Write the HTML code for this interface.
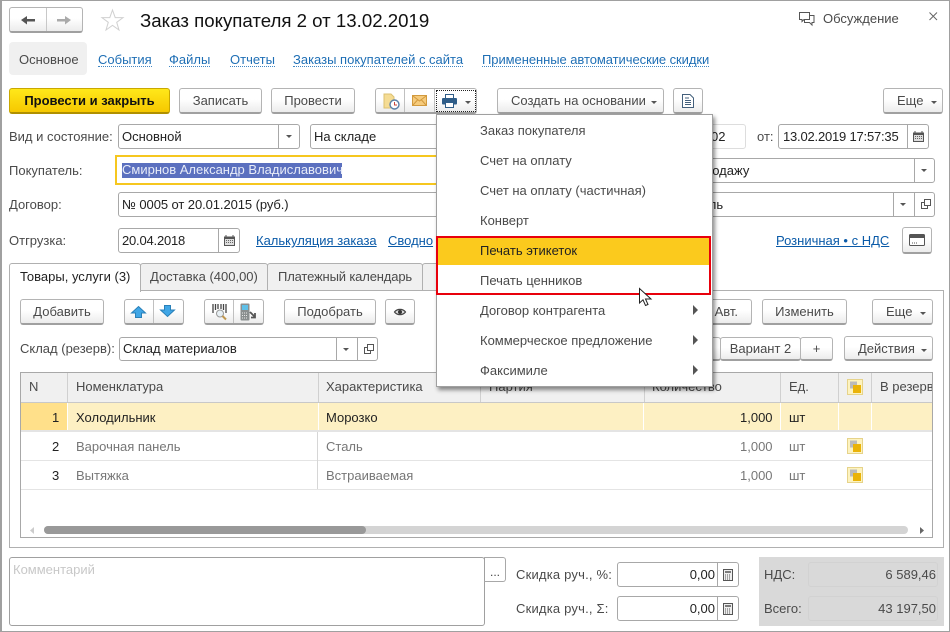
<!DOCTYPE html>
<html><head><meta charset="utf-8">
<style>
html,body{margin:0;padding:0;background:#fff}
#p{position:relative;width:950px;height:632px;overflow:hidden;background:#fff;font-family:"Liberation Sans",sans-serif;font-size:13px;color:#4a4a4a}
#p *{box-sizing:border-box}
.t{position:absolute;white-space:nowrap;line-height:16px;height:16px}
.d{color:#222}
.g{color:#777}
.a{position:absolute}
.l{color:#0a5aa8;text-decoration:underline}
.n{color:#1f6fb5;border-bottom:1px dotted #3f86c4;line-height:16px;height:15px}
.b{position:absolute;border:1px solid #b4b4b4;border-bottom:2px solid #a0a0a0;border-radius:3px;background:linear-gradient(#fff 0,#fff 45%,#ececec 100%);text-align:center;line-height:24px;color:#4a4a4a;white-space:nowrap}
.i{position:absolute;border:1px solid #a8a8a8;border-radius:3px;background:#fff;color:#222;line-height:23px;padding-left:3px;white-space:nowrap}
.v{position:absolute;width:1px;background:#a8a8a8}
.c{position:absolute;width:0;height:0;border-left:3px solid transparent;border-right:3px solid transparent;border-top:3px solid #555}
.m{position:absolute;left:480px;white-space:nowrap;line-height:16px;color:#4a4a4a}
.r{position:absolute;width:0;height:0;border-top:5px solid transparent;border-bottom:5px solid transparent;border-left:5px solid #555;left:693px}
.h{position:absolute;background:#f0f0f0;border-right:1px solid #d0d0d0;top:373px;height:29px}
.vc{position:absolute;width:1px;background:#d6d6d6}
svg{position:absolute;overflow:visible}
</style></head><body><div id="p">

<div class="a" style="left:0;top:0;width:950px;height:632px;border:1px solid #a0a0a0;border-width:1px 1px 1px 2px"></div>

<!-- nav -->
<div class="b" style="left:9px;top:7px;width:74px;height:26px"></div>
<div class="v" style="left:46px;top:8px;height:23px;background:#c8c8c8"></div>
<svg style="left:21px;top:14px" width="15" height="12"><path d="M0 6L6 2V5H14V7.500H6V10.500Z" fill="#555"/></svg>
<svg style="left:57px;top:14px" width="15" height="12"><path d="M14 6L8 2V5H0V7.500H8V10.500Z" fill="#aaa"/></svg>
<svg style="left:101px;top:9px" width="23" height="23"><path d="M11.5 1L14.2 8.6H22L15.7 13.3L18 21L11.5 16.4L5 21L7.3 13.3L1 8.6H8.8Z" fill="#fff" stroke="#d0d0d0"/></svg>
<div class="t" style="left:140px;top:10px;font-size:18.67px;line-height:22px;height:22px;color:#111">Заказ покупателя 2 от 13.02.2019</div>

<svg style="left:799px;top:12px" width="16" height="15"><path d="M.5.5H10.5V7.5H5L3 9.5V7.5H.5Z M5.5 7.5V10.5H10.5L13 13V10.5H15V3.5H10.5" fill="none" stroke="#555"/></svg>
<div class="t" style="left:823px;top:11px">Обсуждение</div>
<svg style="left:929px;top:12px" width="9" height="9"><path d="M.5.5L8 8M8 .5L.5 8" stroke="#666" fill="none"/></svg>

<!-- section nav -->
<div class="a" style="left:9px;top:42px;width:78px;height:33px;background:#f0f0f0;border-radius:4px"></div>
<div class="t" style="left:19px;top:52px">Основное</div>
<div class="t n" style="left:98px;top:52px">События</div>
<div class="t n" style="left:169px;top:52px">Файлы</div>
<div class="t n" style="left:230px;top:52px">Отчеты</div>
<div class="t n" style="left:293px;top:52px">Заказы покупателей с сайта</div>
<div class="t n" style="left:482px;top:52px;letter-spacing:-.06px">Примененные автоматические скидки</div>

<!-- command bar -->
<div class="b" style="left:9px;top:88px;width:161px;height:26px;background:linear-gradient(#ffe81a,#f6c800);border-color:#c9a800;border-bottom-color:#b09000;color:#111;font-weight:bold">Провести и закрыть</div>
<div class="b" style="left:179px;top:88px;width:83px;height:26px">Записать</div>
<div class="b" style="left:271px;top:88px;width:84px;height:26px">Провести</div>
<div class="b" style="left:375px;top:88px;width:102px;height:26px"></div>
<div class="v" style="left:404px;top:89px;height:23px;background:#c0c0c0"></div>
<div class="v" style="left:434px;top:89px;height:23px;background:#c0c0c0"></div>
<div class="a" style="left:436px;top:90px;width:40px;height:22px;border:1px dotted #222"></div>
<svg style="left:383px;top:93px" width="17" height="17"><path d="M1 1H8L11 4V15H1Z" fill="#f5dc94" stroke="#dcc070"/><circle cx="11.5" cy="11.5" r="4.5" fill="#fff" stroke="#5a7fa8" stroke-width="1.4"/><path d="M11.5 9V12H14" stroke="#c8463c" fill="none"/></svg>
<svg style="left:412px;top:95px" width="15" height="12"><rect x=".5" y=".5" width="14" height="10" fill="#f6cb7c" stroke="#d29a3e"/><path d="M1 1L7.500 6L14 1M1 10L5.500 5M14 10L9.500 5" fill="none" stroke="#d29a3e"/></svg>
<svg style="left:442px;top:94px" width="15" height="14"><rect x="3.500" y=".5" width="8" height="4" fill="#fff" stroke="#2f5d88"/><rect x="0" y="4" width="15" height="6.500" rx="1" fill="#2f5d88"/><rect x="3.500" y="8.500" width="8" height="5" fill="#fff" stroke="#2f5d88"/></svg>
<div class="c" style="left:465px;top:101px"></div>
<div class="b" style="left:497px;top:88px;width:167px;height:26px;text-align:left;padding-left:13px">Создать на основании</div>
<div class="c" style="left:651px;top:101px"></div>
<div class="b" style="left:673px;top:88px;width:30px;height:26px"></div>
<svg style="left:682px;top:94px" width="12" height="14"><path d="M.5.5H8L11.500 4V13.500H.5Z" fill="#fff" stroke="#44607c"/><path d="M3 4H7M3 6.500H9M3 8.500H9M3 10.500H9" stroke="#44607c"/></svg>
<div class="b" style="left:883px;top:88px;width:60px;height:26px;text-align:left;padding-left:13px">Еще</div>
<div class="c" style="left:931px;top:101px"></div>

<!-- row 1 -->
<div class="t" style="left:9px;top:129px">Вид и состояние:</div>
<div class="i" style="left:118px;top:124px;width:182px;height:25px">Основной</div>
<div class="v" style="left:278px;top:125px;height:23px"></div>
<div class="c" style="left:286px;top:135px"></div>
<div class="i" style="left:310px;top:124px;width:160px;height:25px">На складе</div>
<div class="i" style="left:650px;top:124px;width:96px;height:25px;border-color:#ddd;padding-left:60px">02</div>
<div class="t" style="left:757px;top:129px">от:</div>
<div class="i" style="left:778px;top:124px;width:151px;height:25px;padding-left:4px;letter-spacing:-.2px">13.02.2019 17:57:35</div>
<div class="v" style="left:907px;top:125px;height:23px"></div>
<svg style="left:913px;top:131px" width="11" height="11"><path d="M0 1.500H11V11H0Z" fill="#555"/><path d="M2 0V2M9 0V2" stroke="#555"/><path d="M1 4H10V10H1Z" fill="#ddd"/><path d="M2 5.500H9M2 7.500H9" stroke="#666" stroke-dasharray="1 1"/></svg>

<!-- row 2 -->
<div class="t" style="left:9px;top:163px">Покупатель:</div>
<div class="a" style="left:115px;top:155px;width:340px;height:30px;border:2px solid #f6c71f;background:#fff"></div>
<div class="t" style="left:122px;top:163px;background:#5b70bf;color:#e8ecf8;height:15px;line-height:14px;width:220px">Смирнов Александр Владиславович</div>
<div class="i" style="left:650px;top:158px;width:285px;height:25px;padding-left:54px">родажу</div>
<div class="v" style="left:914px;top:159px;height:23px"></div>
<div class="c" style="left:921px;top:169px"></div>

<!-- row 3 -->
<div class="t" style="left:9px;top:197px">Договор:</div>
<div class="i" style="left:118px;top:192px;width:340px;height:25px;letter-spacing:-.08px">№ 0005 от 20.01.2015 (руб.)</div>
<div class="i" style="left:650px;top:192px;width:285px;height:25px;padding-left:51px">ель</div>
<div class="v" style="left:893px;top:193px;height:23px"></div>
<div class="v" style="left:914px;top:193px;height:23px"></div>
<div class="c" style="left:900px;top:203px"></div>
<svg style="left:921px;top:199px" width="10" height="10"><path d="M3.500.5H9.500V6.500H3.500Z M3.500 3.500H.5V9.500H6.500V6.500" fill="none" stroke="#555"/></svg>

<!-- row 4 -->
<div class="t" style="left:9px;top:233px">Отгрузка:</div>
<div class="i" style="left:118px;top:228px;width:122px;height:25px;letter-spacing:-.2px">20.04.2018</div>
<div class="v" style="left:218px;top:229px;height:23px"></div>
<svg style="left:224px;top:235px" width="11" height="11"><path d="M0 1.500H11V11H0Z" fill="#555"/><path d="M2 0V2M9 0V2" stroke="#555"/><path d="M1 4H10V10H1Z" fill="#ddd"/><path d="M2 5.500H9M2 7.500H9" stroke="#666" stroke-dasharray="1 1"/></svg>
<div class="t l" style="left:256px;top:233px">Калькуляция заказа</div>
<div class="t l" style="left:388px;top:233px">Сводно</div>
<div class="t l" style="left:776px;top:233px">Розничная • с НДС</div>
<div class="b" style="left:902px;top:227px;width:30px;height:27px"></div>
<svg style="left:909px;top:234px" width="16" height="12"><rect x=".5" y=".5" width="15" height="11" rx="1" fill="#fff" stroke="#555"/><rect x="1" y="1" width="14" height="3" fill="#555"/><path d="M3 9H8" stroke="#555" stroke-dasharray="1 1"/></svg>

<!-- tabs panel -->
<div class="a" style="left:9px;top:290px;width:935px;height:258px;border:1px solid #b0b0b0"></div>
<div class="a" style="left:9px;top:263px;width:132px;height:29px;border:1px solid #b0b0b0;border-bottom:0;background:#fff;border-radius:3px 3px 0 0"></div>
<div class="a" style="left:140px;top:263px;width:128px;height:28px;border:1px solid #b0b0b0;background:#f0f0f0;border-radius:3px 3px 0 0"></div>
<div class="a" style="left:267px;top:263px;width:156px;height:28px;border:1px solid #b0b0b0;background:#f0f0f0;border-radius:3px 3px 0 0"></div>
<div class="a" style="left:422px;top:263px;width:40px;height:28px;border:1px solid #b0b0b0;background:#f0f0f0;border-radius:3px 3px 0 0"></div>
<div class="t d" style="left:20px;top:269px">Товары, услуги (3)</div>
<div class="t" style="left:150px;top:269px">Доставка (400,00)</div>
<div class="t" style="left:278px;top:269px;letter-spacing:-.15px">Платежный календарь</div>

<!-- toolbar -->
<div class="b" style="left:20px;top:299px;width:84px;height:26px">Добавить</div>
<div class="b" style="left:124px;top:299px;width:60px;height:26px"></div>
<div class="v" style="left:153px;top:300px;height:23px;background:#c0c0c0"></div>
<svg style="left:131px;top:306px" width="15" height="12"><path d="M7.500 .5L14.500 7H10.500V11.500H4.500V7H.5Z" fill="#3fa6e6" stroke="#2a80b8"/></svg>
<svg style="left:160px;top:305px" width="15" height="12"><path d="M7.500 11.500L14.500 5H10.500V.5H4.500V5H.5Z" fill="#3fa6e6" stroke="#2a80b8"/></svg>
<div class="b" style="left:204px;top:299px;width:60px;height:26px"></div>
<div class="v" style="left:233px;top:300px;height:23px;background:#c0c0c0"></div>
<svg style="left:212px;top:304px" width="16" height="16"><path d="M1 0V9M3.500 0V6M6 0V5M9 0V5M11.500 0V6M14 0V9" stroke="#444" stroke-width="1.300" fill="none"/><circle cx="8" cy="9.500" r="3.500" fill="#e8f0f4" stroke="#999"/><path d="M10.500 12L14 15.500" stroke="#c09850" stroke-width="2"/></svg>
<svg style="left:240px;top:303px" width="17" height="18"><rect x=".5" y=".5" width="9" height="17" rx="1" fill="#8a8f8f"/><rect x="2" y="2" width="6" height="5" fill="#5fc0e8"/><path d="M2 10H8M2 12.500H8M2 15H8" stroke="#e8e8e8" stroke-dasharray="1 1"/><path d="M10 9L15 14M15 10V14.500H11" stroke="#555" stroke-width="1.800" fill="none"/></svg>
<div class="b" style="left:284px;top:299px;width:92px;height:26px">Подобрать</div>
<div class="b" style="left:385px;top:299px;width:30px;height:26px"></div>
<svg style="left:394px;top:308px" width="12" height="8"><path d="M.5 4C3 .5 9 .5 11.500 4C9 7.500 3 7.500 .5 4Z" fill="#ddd" stroke="#444" stroke-width="1.200"/><circle cx="6" cy="4" r="2" fill="#333"/></svg>
<div class="b" style="left:700px;top:299px;width:52px;height:26px;text-align:right;padding-right:13px">Авт.</div>
<div class="b" style="left:762px;top:299px;width:85px;height:26px">Изменить</div>
<div class="b" style="left:872px;top:299px;width:61px;height:26px;text-align:left;padding-left:13px">Еще</div>
<div class="c" style="left:920px;top:312px"></div>

<!-- warehouse row -->
<div class="t" style="left:20px;top:341px">Склад (резерв):</div>
<div class="i" style="left:119px;top:337px;width:259px;height:24px;line-height:21px">Склад материалов</div>
<div class="v" style="left:336px;top:338px;height:22px"></div>
<div class="v" style="left:357px;top:338px;height:22px"></div>
<div class="c" style="left:343px;top:348px"></div>
<svg style="left:364px;top:344px" width="10" height="10"><path d="M3.500.5H9.500V6.500H3.500Z M3.500 3.500H.5V9.500H6.500V6.500" fill="none" stroke="#555"/></svg>
<div class="b" style="left:700px;top:337px;width:21px;height:24px"></div>
<div class="b" style="left:720px;top:337px;width:81px;height:24px;line-height:21px">Вариант 2</div>
<div class="b" style="left:800px;top:337px;width:33px;height:24px;line-height:21px">+</div>
<div class="b" style="left:844px;top:336px;width:89px;height:25px;line-height:23px;text-align:left;padding-left:13px">Действия</div>
<div class="c" style="left:921px;top:349px"></div>

<!-- table -->
<div class="a" style="left:20px;top:372px;width:913px;height:166px;border:1px solid #a8a8a8;background:#fff;overflow:hidden"></div>
<div class="h" style="left:21px;width:47px"></div>
<div class="h" style="left:68px;width:251px"></div>
<div class="h" style="left:319px;width:162px"></div>
<div class="h" style="left:481px;width:164px"></div>
<div class="h" style="left:645px;width:136px"></div>
<div class="h" style="left:781px;width:58px"></div>
<div class="h" style="left:839px;width:33px"></div>
<div class="h" style="left:872px;width:60px;border-right:0"></div>
<div class="a" style="left:21px;top:402px;width:911px;height:1px;background:#c8c8c8"></div>
<div class="t" style="left:29px;top:379px">N</div>
<div class="t" style="left:76px;top:379px">Номенклатура</div>
<div class="t" style="left:326px;top:379px">Характеристика</div>
<div class="t" style="left:489px;top:379px">Партия</div>
<div class="t" style="left:652px;top:379px">Количество</div>
<div class="t" style="left:789px;top:379px">Ед.</div>
<div class="a" style="left:872px;top:373px;width:60px;height:29px;overflow:hidden"><div class="t" style="left:8px;top:6px">В резерве</div></div>
<svg style="left:847px;top:379px" width="16" height="16"><rect x=".5" y=".5" width="15" height="15" fill="#fdf3c0" stroke="#e6d38a"/><rect x="3" y="2.500" width="7" height="7" fill="#bbb"/><rect x="6" y="6" width="8" height="8" fill="#eab308"/></svg>

<div class="a" style="left:21px;top:403px;width:911px;height:27px;background:#fdf0c3"></div>
<div class="a" style="left:21px;top:403px;width:46px;height:27px;background:#ffe08a"></div>
<div class="a" style="left:67px;top:403px;width:1px;height:27px;background:#fff"></div>
<div class="a" style="left:318px;top:403px;width:1px;height:27px;background:#fff"></div>
<div class="a" style="left:643px;top:403px;width:1px;height:27px;background:#fff"></div>
<div class="a" style="left:780px;top:403px;width:1px;height:27px;background:#fff"></div>
<div class="a" style="left:838px;top:403px;width:1px;height:27px;background:#fff"></div>
<div class="a" style="left:871px;top:403px;width:1px;height:27px;background:#fff"></div>
<div class="a" style="left:21px;top:430px;width:911px;height:2px;background:#e4e4e4"></div>
<div class="a" style="left:21px;top:460px;width:911px;height:1px;background:#e4e4e4"></div>
<div class="a" style="left:21px;top:489px;width:911px;height:1px;background:#e4e4e4"></div>
<div class="vc" style="left:317px;top:432px;height:57px"></div>

<div class="t d" style="left:52px;top:410px">1</div>
<div class="t d" style="left:76px;top:410px">Холодильник</div>
<div class="t d" style="left:326px;top:410px">Морозко</div>
<div class="t d" style="left:740px;top:410px">1,000</div>
<div class="t d" style="left:789px;top:410px">шт</div>
<div class="t d" style="left:52px;top:439px">2</div>
<div class="t g" style="left:76px;top:439px">Варочная панель</div>
<div class="t g" style="left:326px;top:439px">Сталь</div>
<div class="t g" style="left:740px;top:439px">1,000</div>
<div class="t g" style="left:789px;top:439px">шт</div>
<div class="t d" style="left:52px;top:468px">3</div>
<div class="t g" style="left:76px;top:468px">Вытяжка</div>
<div class="t g" style="left:326px;top:468px">Встраиваемая</div>
<div class="t g" style="left:740px;top:468px">1,000</div>
<div class="t g" style="left:789px;top:468px">шт</div>
<svg style="left:847px;top:438px" width="16" height="16"><rect x=".5" y=".5" width="15" height="15" fill="#fdf3c0" stroke="#e6d38a"/><rect x="3" y="2.500" width="7" height="7" fill="#bbb"/><rect x="6" y="6" width="8" height="8" fill="#eab308"/></svg>
<svg style="left:847px;top:467px" width="16" height="16"><rect x=".5" y=".5" width="15" height="15" fill="#fdf3c0" stroke="#e6d38a"/><rect x="3" y="2.500" width="7" height="7" fill="#bbb"/><rect x="6" y="6" width="8" height="8" fill="#eab308"/></svg>

<!-- scrollbar -->
<div class="a" style="left:44px;top:526px;width:864px;height:8px;background:#d4d4d4;border-radius:4px"></div>
<div class="a" style="left:44px;top:526px;width:322px;height:8px;background:#999;border-radius:4px"></div>
<svg style="left:29px;top:527px" width="6" height="7"><path d="M5 0V7L1 3.500Z" fill="#ccc"/></svg>
<svg style="left:919px;top:527px" width="6" height="7"><path d="M1 0V7L5 3.500Z" fill="#666"/></svg>

<!-- menu -->
<div class="a" style="left:436px;top:114px;width:277px;height:273px;background:#fff;border:1px solid #a0a0a0;box-shadow:2px 3px 4px rgba(0,0,0,.45)"></div>
<div class="a" style="left:437px;top:237px;width:274px;height:28px;background:#fbca1d"></div>
<div class="m" style="top:123px">Заказ покупателя</div>
<div class="m" style="top:153px">Счет на оплату</div>
<div class="m" style="top:183px">Счет на оплату (частичная)</div>
<div class="m" style="top:213px">Конверт</div>
<div class="m" style="top:243px;color:#222">Печать этикеток</div>
<div class="m" style="top:273px">Печать ценников</div>
<div class="m" style="top:303px">Договор контрагента</div>
<div class="m" style="top:333px">Коммерческое предложение</div>
<div class="m" style="top:363px">Факсимиле</div>
<div class="r" style="top:305px"></div>
<div class="r" style="top:335px"></div>
<div class="r" style="top:365px"></div>
<div class="a" style="left:436px;top:236px;width:275px;height:59px;border:2px solid #e8000c"></div>
<svg style="left:639px;top:288px" width="14" height="19"><path d="M.5.5V15L4 11.800L6.500 17.500L9 16.500L6.500 11H12Z" fill="#fff" stroke="#222"/></svg>

<!-- bottom -->
<div class="a" style="left:9px;top:557px;width:476px;height:69px;border:1px solid #a0a0a0;border-radius:3px;background:#fff"></div>
<div class="t" style="left:13px;top:562px;color:#c8c8c8">Комментарий</div>
<div class="a" style="left:484px;top:557px;width:22px;height:25px;border:1px solid #a8a8a8;border-left:1px solid #a0a0a0;border-radius:0 3px 3px 0;background:#fff"></div>
<div class="t" style="left:490px;top:564px;color:#444;font-size:12px">...</div>
<div class="t" style="left:516px;top:567px;letter-spacing:.2px">Скидка руч., %:</div>
<div class="t" style="left:516px;top:601px;letter-spacing:.2px">Скидка руч., Σ:</div>
<div class="i" style="left:617px;top:562px;width:122px;height:25px;text-align:right;padding:0 23px 0 0">0,00</div>
<div class="i" style="left:617px;top:596px;width:122px;height:25px;text-align:right;padding:0 23px 0 0">0,00</div>
<div class="v" style="left:717px;top:563px;height:23px"></div>
<div class="v" style="left:717px;top:597px;height:23px"></div>
<svg style="left:723px;top:569px" width="10" height="12"><rect x=".5" y=".5" width="9" height="11" fill="#eee" stroke="#555"/><path d="M2 3H8" stroke="#555" stroke-width="1.500"/><path d="M2 6H8M2 8H8M2 10H8" stroke="#555" stroke-dasharray="1 1"/></svg>
<svg style="left:723px;top:603px" width="10" height="12"><rect x=".5" y=".5" width="9" height="11" fill="#eee" stroke="#555"/><path d="M2 3H8" stroke="#555" stroke-width="1.500"/><path d="M2 6H8M2 8H8M2 10H8" stroke="#555" stroke-dasharray="1 1"/></svg>
<div class="a" style="left:759px;top:557px;width:185px;height:69px;background:#d9d9d9"></div>
<div class="a" style="left:808px;top:562px;width:130px;height:25px;border:1px solid #d2d2d2;border-radius:3px"></div>
<div class="a" style="left:808px;top:596px;width:130px;height:25px;border:1px solid #d2d2d2;border-radius:3px"></div>
<div class="t" style="left:764px;top:567px">НДС:</div>
<div class="t" style="left:764px;top:601px">Всего:</div>
<div class="t" style="right:14px;top:567px">6 589,46</div>
<div class="t" style="right:14px;top:601px">43 197,50</div>
</div></body></html>
